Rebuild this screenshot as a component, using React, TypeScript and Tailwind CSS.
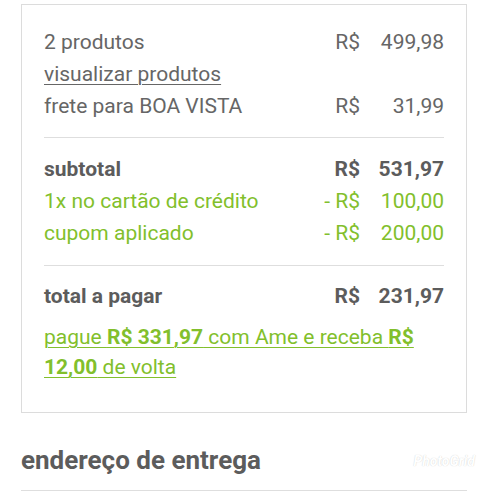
const rows1 = [
  { label: "2 produtos", cur: "R$", value: "499,98" },
  { label: "visualizar produtos", link: true },
  { label: "frete para BOA VISTA", cur: "R$", value: "31,99" },
]

const Row = ({
  label,
  cur,
  value,
  className = "",
}: {
  label: string
  cur?: string
  value?: string
  className?: string
}) => (
  <div className={`flex h-[32px] items-center ${className}`}>
    <span className="flex-1">{label}</span>
    {cur && <span className="text-right">{cur}</span>}
    {value && <span className="w-[84px] text-right">{value}</span>}
  </div>
)

export default function App() {
  return (
    <div className="h-[491px] w-[500px] overflow-hidden bg-white font-['Roboto',sans-serif] text-[21px] text-[#666]">
      <div className="ml-[21px] mt-[4px] w-[446px] border border-[#dcdcdc] px-[22px] pt-[22px] pb-[30px]">
        {rows1.map((r, i) =>
          r.link ? (
            <div key={i} className="flex h-[32px] items-center">
              <span className="underline decoration-1 underline-offset-[3px]">{r.label}</span>
            </div>
          ) : (
            <Row key={i} label={r.label} cur={r.cur} value={r.value} />
          )
        )}
        <div className="mt-[14px] mb-[16px] h-px bg-[#dedede]" />
        <Row label="subtotal" cur="R$" value="531,97" className="font-bold text-[#5c5c5c]" />
        <Row label="1x no cartão de crédito" cur="- R$" value="100,00" className="text-[#82bf2c]" />
        <Row label="cupom aplicado" cur="- R$" value="200,00" className="text-[#82bf2c]" />
        <div className="mt-[15px] mb-[15px] h-px bg-[#dedede]" />
        <Row label="total a pagar" cur="R$" value="231,97" className="font-bold text-[#5c5c5c]" />
        <p className="mt-[9px] pr-[10px] leading-[30px] text-[#82bf2c] underline decoration-1 underline-offset-[3px]">
          pague <b>R$ 331,97</b> com Ame e receba <b>R$ 12,00</b> de volta
        </p>
      </div>
      <div className="relative mx-[21px] mt-[32px] w-[446px]">
        <h2 className="text-[26px] leading-[30px] font-bold text-[#5c5c5c]">endereço de entrega</h2>
        <span className="absolute right-[-8px] top-[6px] text-[14px] font-bold italic text-white [text-shadow:0_0_1px_#c8c8c8]">
          PhotoGrid
        </span>
        <div className="mt-[15px] h-px bg-[#dedede]" />
      </div>
    </div>
  )
}
